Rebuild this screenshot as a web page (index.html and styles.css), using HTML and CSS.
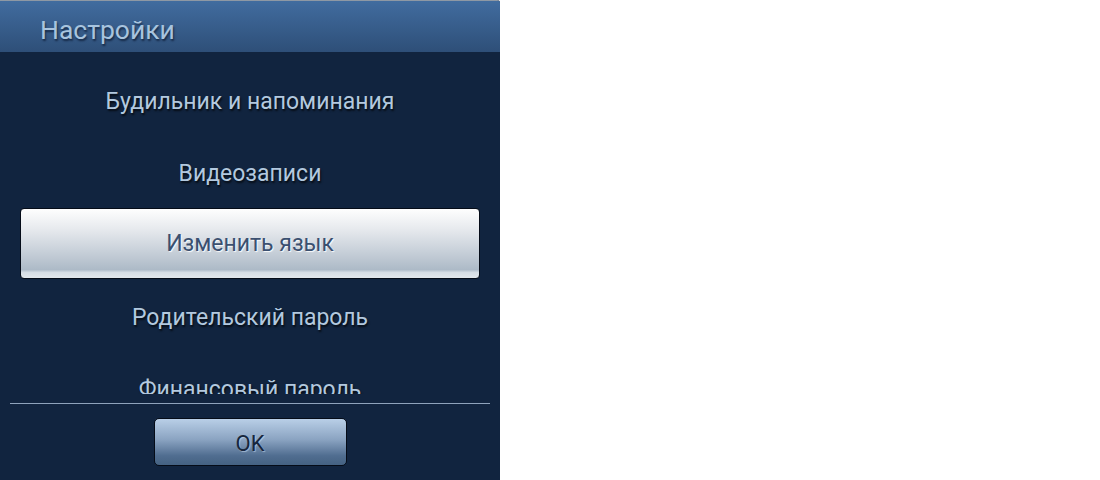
FILE: index.html
```html
<!DOCTYPE html>
<html lang="ru">
<head>
<meta charset="utf-8">
<link rel="stylesheet" href="styles.css">
</head>
<body>
<div class="dialog">
  <div class="header"><span class="title">Настройки</span></div>
  <div class="list">
    <div class="item">Будильник и напоминания</div>
    <div class="item">Видеозаписи</div>
    <div class="item selected"><div class="sel-btn">Изменить язык</div></div>
    <div class="item">Родительский пароль</div>
    <div class="item">Финансовый пароль</div>
  </div>
  <div class="divider"></div>
  <div class="footer"><div class="ok">OK</div></div>
</div>
</body>
</html>
```
FILE: styles.css
```css
html, body {
  margin: 0;
  padding: 0;
  background: #ffffff;
}
body {
  width: 1100px;
  height: 480px;
  overflow: hidden;
  font-family: Roboto, "Noto Sans", sans-serif;
}
.dialog {
  width: 500px;
  height: 480px;
  background: #11243f;
  display: flex;
  flex-direction: column;
  border-top-right-radius: 3px;
  overflow: hidden;
}
.header {
  height: 51px;
  border-top: 1px solid #8e98a4;
  background: linear-gradient(#416c9f, #2e4f78);
  display: flex;
  align-items: center;
  padding-left: 40px;
  flex-shrink: 0;
}
.title {
  font-size: 26.5px;
  color: #a8c4de;
  text-shadow: 1px 2px 2px rgba(0, 10, 30, 0.6);
  padding-top: 6px;
}
.list {
  margin-top: 13px;
  height: 329px;
  overflow: hidden;
  flex-shrink: 0;
}
.item {
  height: 72px;
  display: flex;
  align-items: center;
  justify-content: center;
  font-size: 23px;
  color: #b3c9df;
  text-shadow: 1px 2px 2px rgba(0, 0, 0, 0.7);
}
.item.selected {
  padding: 0 20px;
  align-items: flex-start;
}
.sel-btn {
  flex: 1;
  height: 69px;
  margin-top: -1px;
  border: 1px solid #050c18;
  border-radius: 4px;
  display: flex;
  align-items: center;
  justify-content: center;
  color: #3b5070;
  text-shadow: 1px 1px 1px rgba(255, 255, 255, 0.9);
  background: linear-gradient(#fefefe 0%, #e6e9ed 30%, #c9d1da 60%, #adbac7 88%, #d6dde4 92%, #e2e7ec 100%);
}
.divider {
  height: 1px;
  background: #8fa3bc;
  margin: 9px 10px 0 10px;
  flex-shrink: 0;
}
.footer {
  display: flex;
  justify-content: center;
  padding-top: 14px;
}
.ok {
  width: 193px;
  height: 48px;
  border: 1px solid #050c18;
  border-radius: 5px;
  background: linear-gradient(#b9cfe7 0%, #8aa3c1 45%, #506d90 80%, #456282 100%);
  display: flex;
  align-items: center;
  justify-content: center;
  font-size: 22px;
  padding-top: 2px;
  box-sizing: border-box;
  color: #16263d;
  text-shadow: 1px 1px 1px rgba(200, 220, 240, 0.6);
}
```
